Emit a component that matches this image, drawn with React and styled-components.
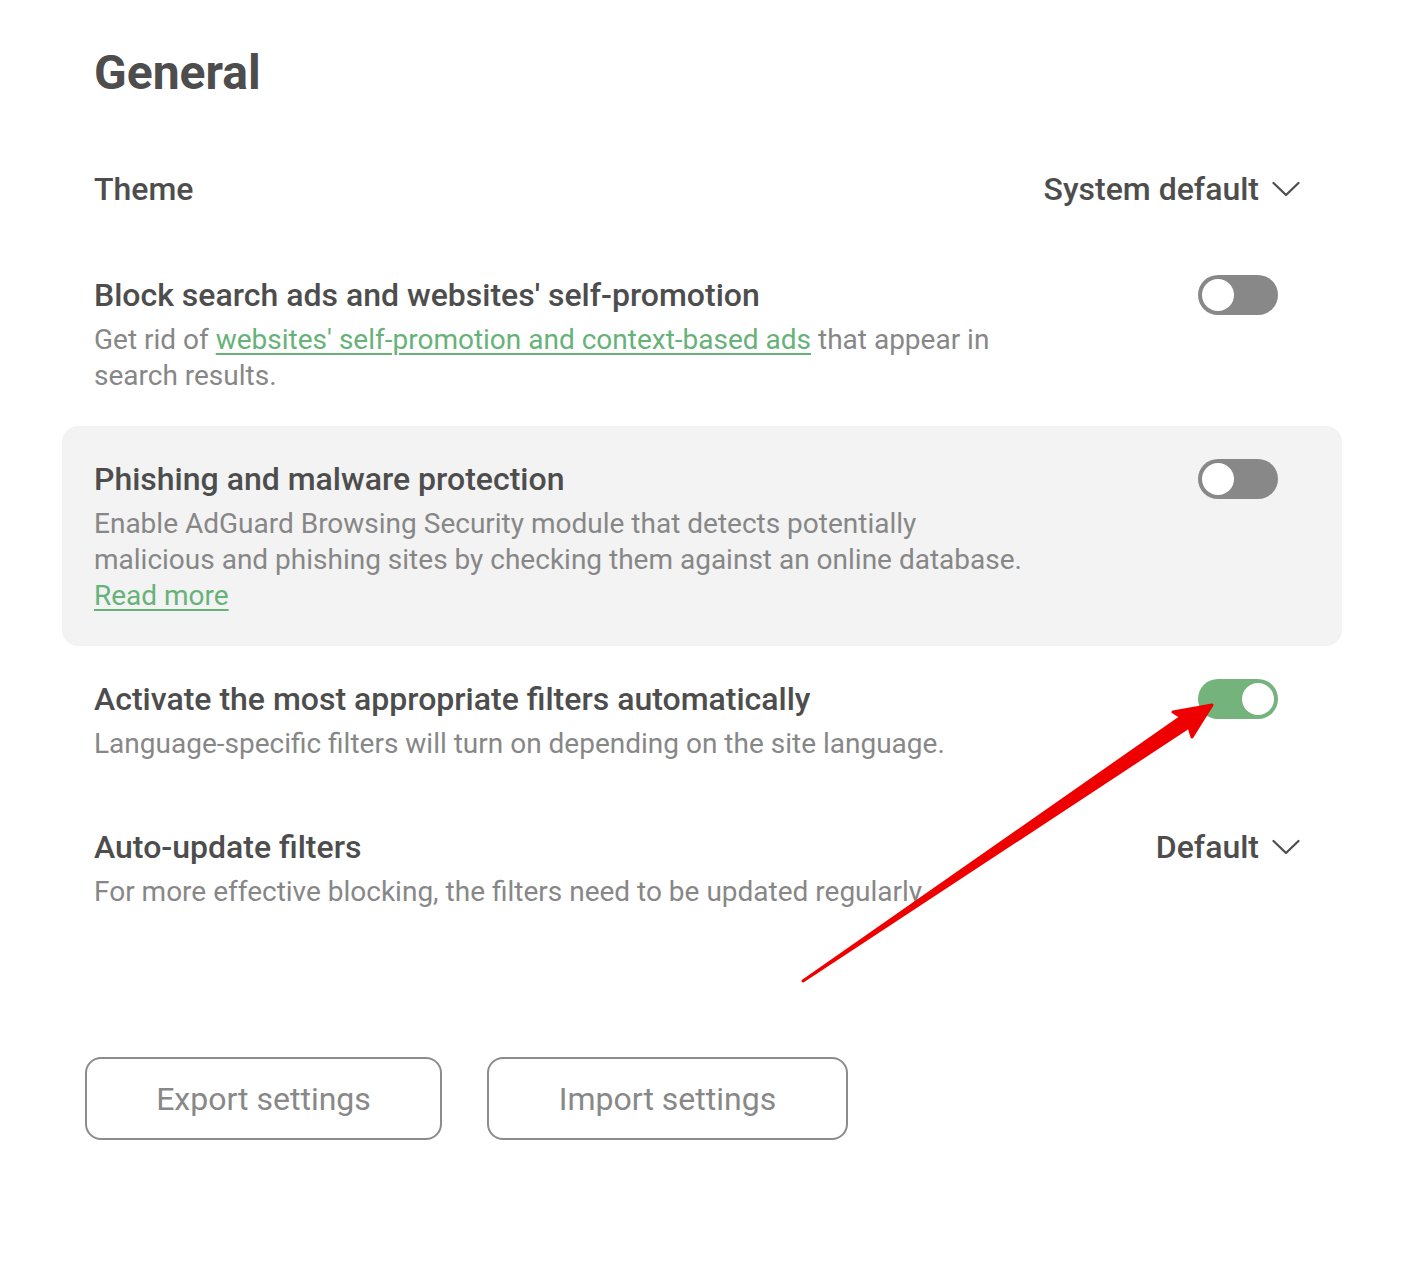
import React from "react";
import styled, { createGlobalStyle } from "styled-components";

const GlobalStyle = createGlobalStyle`
   body {
      margin: 0;
      background: #ffffff;
      font-family: Roboto, "Liberation Sans", Arial, sans-serif;
      color: #4d4d4d;
   }
`;

function Chevron() {
   return (
      <svg width="28" height="16" viewBox="0 0 28 16" fill="none">
         <path d="M1.5 2L14 14L26.5 2" stroke="#4d4d4d" strokeWidth="2.2" strokeLinecap="round" strokeLinejoin="round" />
      </svg>
   );
}

function Toggle({ on }) {
   return (
      <Switch $on={on}>
         <Knob $on={on} />
      </Switch>
   );
}

function Select({ value }) {
   return (
      <SelectBox>
         {value}
         <Chevron />
      </SelectBox>
   );
}

function Row({ title, children, control, highlighted }) {
   return (
      <RowBox $highlighted={highlighted}>
         <RowText>
            <Title>{title}</Title>
            {children && <Desc>{children}</Desc>}
         </RowText>
         {control}
      </RowBox>
   );
}

function Arrow() {
   return (
      <ArrowLayer width="1414" height="1278" viewBox="0 0 1414 1278">
         <polygon
            points="803,981 1181,717 1173,712 1212,705 1192,737 1189,727"
            fill="#ee0000"
            stroke="#ee0000"
            strokeWidth="3"
            strokeLinejoin="round"
         />
      </ArrowLayer>
   );
}

export default function App() {
   return (
      <>
         <GlobalStyle />
         <Page>
            <Heading>General</Heading>
            <Row title="Theme" control={<Select value="System default" />} />
            <Row title="Block search ads and websites' self-promotion" control={<Toggle />}>
               Get rid of <Link>websites' self-promotion and context-based ads</Link> that appear in search results.
            </Row>
            <Row title="Phishing and malware protection" control={<Toggle />} highlighted>
               Enable AdGuard Browsing Security module that detects potentially malicious and phishing sites by checking them against an online database.
               <br />
               <Link>Read more</Link>
            </Row>
            <Row title="Activate the most appropriate filters automatically" control={<Toggle on />}>
               Language-specific filters will turn on depending on the site language.
            </Row>
            <Row title="Auto-update filters" control={<Select value="Default" />}>
               For more effective blocking, the filters need to be updated regularly.
            </Row>
            <Actions>
               <OutlineButton>Export settings</OutlineButton>
               <OutlineButton $wide>Import settings</OutlineButton>
            </Actions>
            <Arrow />
         </Page>
      </>
   );
}

const Page = styled.div`
   position: relative;
   width: 1342px;
   min-height: 1278px;
   padding: 43px 0 0 62px;
   box-sizing: border-box;
`;

const Heading = styled.h1`
   margin: 0 0 33px 32px;
   font-size: 48px;
   line-height: 60px;
   font-weight: 700;
   color: #4d4d4d;
`;

const RowBox = styled.div`
   display: flex;
   align-items: flex-start;
   justify-content: space-between;
   padding: 32px;
   border-radius: 16px;
   background: ${(p) => (p.$highlighted ? "#f3f3f3" : "transparent")};
`;

const RowText = styled.div`
   display: flex;
   flex-direction: column;
   gap: 6px;
`;

const Title = styled.div`
   font-size: 32px;
   line-height: 42px;
   font-weight: 500;
   color: #4d4d4d;
`;

const Desc = styled.div`
   max-width: 930px;
   font-size: 28px;
   line-height: 36px;
   color: #878787;
`;

const Link = styled.a`
   color: #67b279;
   text-decoration: underline;
   text-underline-offset: 4px;
   text-decoration-thickness: 2px;
   cursor: pointer;
`;

const Switch = styled.div`
   flex: none;
   width: 80px;
   height: 40px;
   margin: 1px 32px 0 0;
   border-radius: 20px;
   background: ${(p) => (p.$on ? "#74b37c" : "#888888")};
   display: flex;
   align-items: center;
   justify-content: ${(p) => (p.$on ? "flex-end" : "flex-start")};
   padding: 0 4px;
   box-sizing: border-box;
`;

const Knob = styled.div`
   width: 32px;
   height: 32px;
   border-radius: 50%;
   background: #ffffff;
`;

const SelectBox = styled.div`
   flex: none;
   display: flex;
   align-items: center;
   gap: 13px;
   height: 42px;
   margin-right: 10px;
   font-size: 32px;
   font-weight: 500;
   color: #4d4d4d;
`;

const Actions = styled.div`
   display: flex;
   gap: 45px;
   margin: 115px 0 0 23px;
`;

const OutlineButton = styled.button`
   width: ${(p) => (p.$wide ? "361px" : "357px")};
   height: 83px;
   border: 2px solid #8c8c8c;
   border-radius: 16px;
   background: #ffffff;
   font-family: Roboto, "Liberation Sans", Arial, sans-serif;
   font-size: 32px;
   color: #888888;
   cursor: pointer;
`;

const ArrowLayer = styled.svg`
   position: absolute;
   left: 0;
   top: 0;
   pointer-events: none;
`;
